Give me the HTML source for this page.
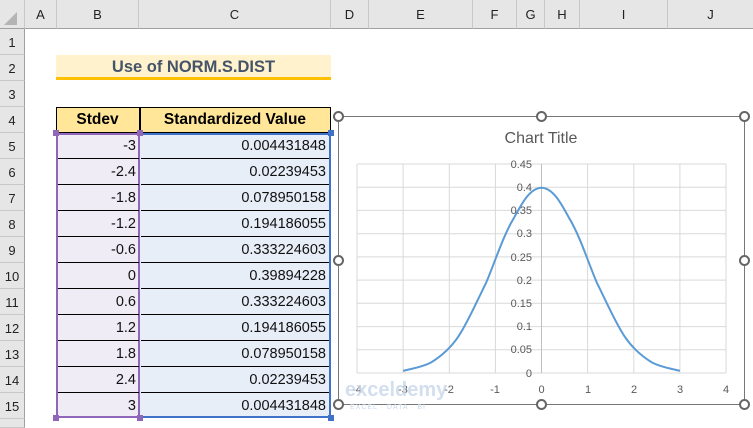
<!DOCTYPE html>
<html><head><meta charset="utf-8"><style>
*{margin:0;padding:0;box-sizing:border-box}
body{width:753px;height:428px;overflow:hidden;background:#fff;font-family:"Liberation Sans",Calibri,sans-serif;position:relative}
.a{position:absolute}
.ch{position:absolute;top:0;height:29px;background:#e6e6e6;border-right:1px solid #c8c8c8;border-bottom:1px solid #a0a0a0;font-size:13px;color:#222;text-align:center;line-height:29px}
.rh{position:absolute;left:0;width:25px;background:#e6e6e6;border-bottom:1px solid #c8c8c8;border-right:1px solid #a0a0a0;font-size:13px;color:#222;text-align:center}
.cell{position:absolute;font-size:14.5px;color:#111;text-align:right;padding-right:3px;border-bottom:1.5px solid #000}
.h{position:absolute;width:11px;height:11px;border:2px solid #666;border-radius:50%;background:#fff}
</style></head><body>
<div class="ch" style="left:0;width:25px"></div>
<div class="ch" style="left:25px;width:32px">A</div>
<div class="ch" style="left:57px;width:82px">B</div>
<div class="ch" style="left:139px;width:192px">C</div>
<div class="ch" style="left:331px;width:38px">D</div>
<div class="ch" style="left:369px;width:104px">E</div>
<div class="ch" style="left:473px;width:44px">F</div>
<div class="ch" style="left:517px;width:28px">G</div>
<div class="ch" style="left:545px;width:35px">H</div>
<div class="ch" style="left:580px;width:88px">I</div>
<div class="ch" style="left:668px;width:85px;border-right:none">J</div>
<svg class="a" style="left:4px;top:12px" width="14" height="14"><polygon points="13,0 13,13 0,13" fill="#b4b4b4"/></svg>
<div id="rows"></div>
<div class="a" style="left:56px;top:55px;width:275px;height:25px;background:#fff2cc;border-bottom:3px solid #ffc000;text-align:center;font-weight:bold;font-size:16.5px;color:#44546a;line-height:24px">Use of NORM.S.DIST</div>
<div class="a" style="left:56px;top:107px;width:275px;height:26px;background:#ffe699;border:1.5px solid #000"></div>
<div class="a" style="left:139px;top:107px;width:1.5px;height:26px;background:#000"></div>
<div class="a" style="left:56px;top:107px;width:83px;height:26px;font-weight:bold;font-size:15.5px;text-align:center;line-height:26px">Stdev</div>
<div class="a" style="left:139px;top:107px;width:192px;height:26px;font-weight:bold;font-size:15.5px;text-align:center;line-height:26px">Standardized Value</div>
<div class="a" style="left:56px;top:133px;width:84px;height:285px;background:#f0ecf6;border:2px solid #8f66b8"></div>
<div class="a" style="left:140px;top:133px;width:191px;height:285px;background:#e8eef8;border:2px solid #3f72c8;border-left:none"></div>
<div id="data"></div>
<div class="a" style="left:53px;top:130px;width:6px;height:6px;background:#8f66b8"></div>
<div class="a" style="left:137px;top:130px;width:6px;height:6px;background:#8f66b8"></div>
<div class="a" style="left:328px;top:130px;width:6px;height:6px;background:#3f72c8"></div>
<div class="a" style="left:53px;top:415px;width:6px;height:6px;background:#8f66b8"></div>
<div class="a" style="left:137px;top:415px;width:6px;height:6px;background:#8f66b8"></div>
<div class="a" style="left:328px;top:415px;width:6px;height:6px;background:#3f72c8"></div>
<div class="a" style="left:338px;top:116px;width:407px;height:289px;background:#fff;border:1.5px solid #777"></div>
<svg class="a" style="left:0;top:0" width="753" height="428">
<g stroke="#d9d9d9" stroke-width="1">
<line x1="357" x2="726" y1="164" y2="164"/><line x1="357" x2="726" y1="187.2" y2="187.2"/><line x1="357" x2="726" y1="210.4" y2="210.4"/><line x1="357" x2="726" y1="233.7" y2="233.7"/><line x1="357" x2="726" y1="256.9" y2="256.9"/><line x1="357" x2="726" y1="280.1" y2="280.1"/><line x1="357" x2="726" y1="303.3" y2="303.3"/><line x1="357" x2="726" y1="326.6" y2="326.6"/><line x1="357" x2="726" y1="349.8" y2="349.8"/><line x1="357" x2="726" y1="373" y2="373"/>
<line y1="164" y2="373" x1="357" x2="357"/><line y1="164" y2="373" x1="403.1" x2="403.1"/><line y1="164" y2="373" x1="449.3" x2="449.3"/><line y1="164" y2="373" x1="495.4" x2="495.4"/><line y1="164" y2="373" x1="587.6" x2="587.6"/><line y1="164" y2="373" x1="633.8" x2="633.8"/><line y1="164" y2="373" x1="679.9" x2="679.9"/><line y1="164" y2="373" x1="726" x2="726"/>
</g>
<line x1="541.5" x2="541.5" y1="164" y2="373" stroke="#bfbfbf"/>
<g font-family="Liberation Sans" font-size="11" fill="#595959" text-anchor="end">
<text x="532" y="168">0.45</text><text x="532" y="191">0.4</text><text x="532" y="214">0.35</text><text x="532" y="237">0.3</text><text x="532" y="261">0.25</text><text x="532" y="284">0.2</text><text x="532" y="307">0.15</text><text x="532" y="330">0.1</text><text x="532" y="353">0.05</text><text x="532" y="377">0</text>
</g>
<g font-family="Liberation Sans" font-size="11" fill="#595959" text-anchor="middle">
<text x="357" y="393">-4</text><text x="403" y="393">-3</text><text x="449" y="393">-2</text><text x="495" y="393">-1</text><text x="541.5" y="393">0</text><text x="588" y="393">1</text><text x="634" y="393">2</text><text x="680" y="393">3</text><text x="726" y="393">4</text>
</g>
<text x="541" y="143" font-family="Liberation Sans" font-size="16" fill="#595959" text-anchor="middle">Chart Title</text>
<path d="M403.1,370.9 C412,368.5 421,367.5 430.8,362.6 C440,357 450,349 458.5,336.3 C468,322 476,303 486.1,282.8 C495,262 503,236 513.8,218.2 C522,203 530,188 541.5,187.7 C553,188 561,203 569.2,218.2 C580,236 588,262 596.9,282.8 C607,303 615,322 624.5,336.3 C633,349 643,357 652.2,362.6 C662,367.5 671,368.5 679.9,370.9" fill="none" stroke="#5b9bd5" stroke-width="2"/>
<text x="345" y="396" font-family="Liberation Sans" font-size="20" font-weight="bold" fill="#c9d6ea" opacity="0.8">exceldemy</text>
<text x="350" y="409" font-family="Liberation Sans" font-size="7" fill="#c9d6ea" letter-spacing="1">EXCEL · DATA · BI</text>
</svg>
<div class="h" style="left:333px;top:111px"></div><div class="h" style="left:536px;top:111px"></div><div class="h" style="left:739px;top:111px"></div>
<div class="h" style="left:333px;top:255px"></div><div class="h" style="left:739px;top:255px"></div>
<div class="h" style="left:333px;top:399px"></div><div class="h" style="left:536px;top:399px"></div><div class="h" style="left:739px;top:399px"></div>
<script>
var r='';for(var i=1;i<=15;i++){var t=29+(i-1)*26;r+='<div class="rh" style="top:'+t+'px;height:26px;line-height:28px">'+i+'</div>';}
r+='<div class="rh" style="top:419px;height:9px"></div>';
document.getElementById('rows').innerHTML=r;
var s=['-3','-2.4','-1.8','-1.2','-0.6','0','0.6','1.2','1.8','2.4','3'],v=['0.004431848','0.02239453','0.078950158','0.194186055','0.333224603','0.39894228','0.333224603','0.194186055','0.078950158','0.02239453','0.004431848'];
var d='';for(var i=0;i<11;i++){var t=133+i*26;var bb=i<10?'':'border-bottom:none;';d+='<div class="cell" style="left:58px;top:'+t+'px;width:81px;height:26px;line-height:26px;'+bb+'">'+s[i]+'</div><div class="cell" style="left:141px;top:'+t+'px;width:188px;height:26px;line-height:26px;'+bb+'">'+v[i]+'</div>';}
document.getElementById('data').innerHTML=d;
</script>
</body></html>
